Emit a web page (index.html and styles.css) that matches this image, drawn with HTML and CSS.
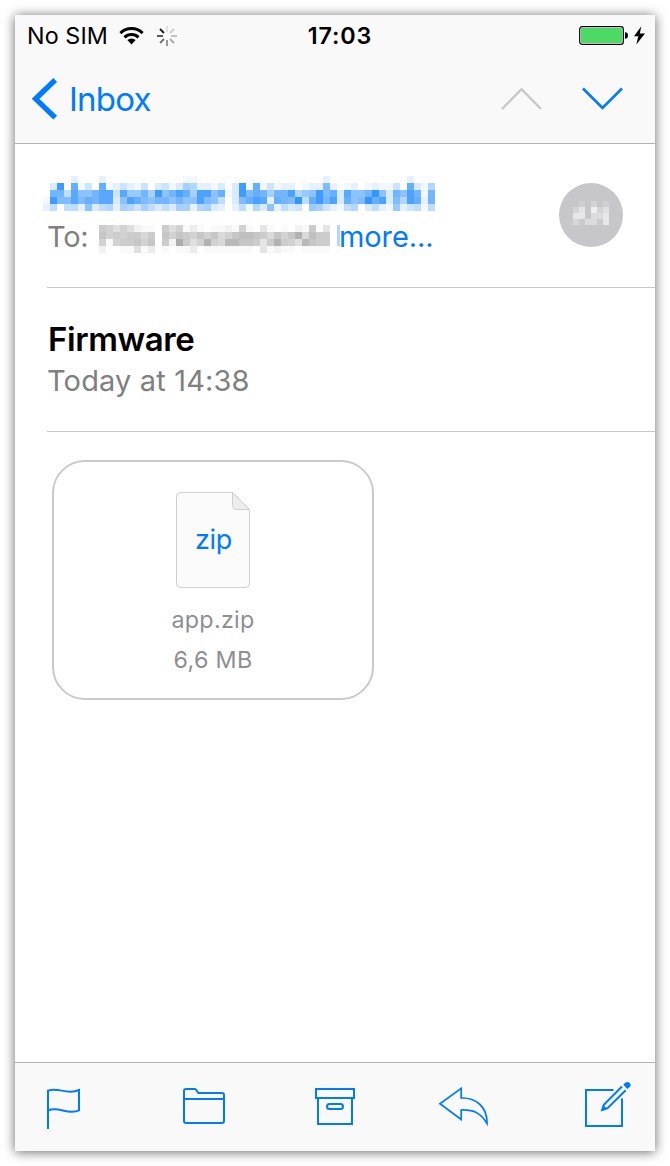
FILE: index.html
```html
<!DOCTYPE html>
<html lang="en">
<head>
<meta charset="utf-8">
<title>Firmware</title>
<link rel="stylesheet" href="styles.css">
</head>
<body>
<main class="phone">
  <header class="top">
    <div class="status">
      <div class="status-left">
        <span class="carrier">No SIM</span>
        <svg class="wifi" width="26" height="20" viewBox="0 0 26 20">
          <g fill="none" stroke="#000" stroke-width="3">
            <path d="M1.400 7.100A15.800 15.800 0 0 1 23.600 7.100"/>
            <path d="M5.500 11.400A10 10 0 0 1 19.500 11.400"/>
          </g>
          <path d="M8.300 14.100A6 6 0 0 1 16.700 14.100L12.500 18.400Z"/>
        </svg>
        <svg class="spinner" width="20" height="20" viewBox="-10 -10 20 20" stroke-width="1.8">
          <path stroke="#dedede" d="M0-4V-10"/>
          <path stroke="#cdcdcd" d="M3-3L7-7"/>
          <path stroke="#bbb" d="M4 0H10"/>
          <path stroke="#a5a5a5" d="M3 3L7 7"/>
          <path stroke="#8c8c8c" d="M0 4V10"/>
          <path stroke="#707070" d="M-3 3L-7 7"/>
          <path stroke="#484848" d="M-4 0H-10"/>
          <path stroke="#181818" d="M-3-3L-7-7"/>
        </svg>
      </div>
      <span class="clock">17:03</span>
      <div class="status-right">
        <svg width="67" height="20" viewBox="0 0 67 20">
          <rect x=".7" y=".7" width="43.600" height="17.600" rx="2.600" fill="#fff" stroke="#000" stroke-width="1.200"/>
          <rect x="2" y="2" width="41" height="15" rx="1.300" fill="#4cd964"/>
          <path d="M46 6.200C48.300 6.400 49 7.500 49 9.500S48.300 12.600 46 12.800Z"/>
          <path d="M62.300 .3L55 10.200H59.300L57.300 18.600L66 7.600H60.800Z"/>
        </svg>
      </div>
    </div>
    <nav class="nav">
      <a class="back">
        <svg width="26" height="42" viewBox="0 0 26 42" fill="none" stroke="#007aff" stroke-width="5.300"><path d="M23.200 2.000L3.600 20.800L23.200 39.700"/></svg>
        <span>Inbox</span>
      </a>
      <div class="arrows">
        <svg width="42" height="24" viewBox="0 0 42 24" fill="none" stroke="#c7c7c7" stroke-width="2.400"><path d="M1 22L20.500 2.200L40 22"/></svg>
        <svg width="42" height="24" viewBox="0 0 42 24" fill="none" stroke="#007aff" stroke-width="2.600"><path d="M1 1.500L20.500 21L40 1.500"/></svg>
      </div>
    </nav>
  </header>

  <section class="people">
    <svg class="mosaic-name" data-cell="7" data-ink="#007aff" data-scale="20" width="392" height="35" shape-rendering="crispEdges"></svg>
    <div class="recipient">
      <span class="to">To:</span>
      <svg class="mosaic-to" data-cell="7" data-ink="#000" data-scale="40" width="231" height="28" shape-rendering="crispEdges"></svg>
      <i class="sliver"></i>
      <a class="more">more...</a>
    </div>
    <div class="avatar">
      <svg class="mosaic-avatar" data-cell="6" data-ink="#fff" data-scale="14" width="42" height="24" shape-rendering="crispEdges"></svg>
    </div>
  </section>

  <section class="subject">
    <h1>Firmware</h1>
    <p>Today at 14:38</p>
  </section>

  <section class="content">
    <div class="attachment">
      <div class="file">
        <svg width="74" height="96" viewBox="0 0 74 96" stroke="#cfcfcf">
          <path fill="#fbfbfb" d="M4.500 .5H56.500L73.500 17.500V91.500A4 4 0 0 1 69.500 95.500H4.500A4 4 0 0 1 .5 91.500V4.500A4 4 0 0 1 4.500 .5Z"/>
          <path fill="#ededed" d="M56.500 .5V13.500A4 4 0 0 0 60.500 17.500H73.500Z"/>
        </svg>
        <span class="ext">zip</span>
      </div>
      <span class="filename">app.zip</span>
      <span class="size">6,6 MB</span>
    </div>
  </section>

  <footer class="toolbar">
    <svg class="flag" width="36" height="42" viewBox="0 0 36 42"><path d="M2 41V2.600C12-1.500 21 7.500 33 2V22.300C22 27.500 12 17.500 2 22.500"/></svg>
    <svg class="folder" width="44" height="38" viewBox="0 0 44 38"><path d="M2 33.500V4Q2 2 4 2H12.500Q14 2 14.700 3.500L16.300 6H40Q42 6 42 8V34Q42 36 40 36H4Q2 36 2 34ZM2 12H42"/></svg>
    <svg class="archive" width="40" height="38" viewBox="0 0 40 38"><path d="M1 2H39V11H1ZM3 11V37H37V11M14.500 17H25.500A2.500 2.500 0 0 1 25.500 22H14.500A2.500 2.500 0 0 1 14.500 17Z"/></svg>
    <svg class="reply" width="52" height="40" viewBox="0 0 52 40"><path stroke-width="1.700" d="M2 17.700L23.200 2.400V12C37 11.500 49.500 20 49 37.500C43 27 36 23.600 23.200 24V33.500Z"/></svg>
    <svg class="compose" width="48" height="48" viewBox="0 0 48 48"><path d="M30.500 10H3V46H39V18.500"/><path d="M39 6.500L20.800 24.700L19.500 29.800L24.600 28.200L42.700 10.200"/><path stroke="none" fill="#007aff" d="M17.500 31.500L20 25L24.500 29ZM40.300 4.700L42.500 2.600C45 .3 49.300 4 47 6.700L44.300 9Z"/></svg>
  </footer>
</main>
<script src="mosaic.js"></script>
</body>
</html>
```

FILE: mosaic.js
```js
// Each character is the opacity of one cell in base 36; a dot is an empty cell.
const rows = {
  'mosaic-name': [
    '....2...2...........11..................2...........2...',
    '.3f.c14.c124214.3413762213.3f1c14122.122a2.12.12114.c316',
    '.bb5d99bdd4d88b7f9bec7ee9c13facb7bbe689fac3d99bg93b9eb1b',
    '1faadacbdd39eca9bb9b99ea95.3aced2cbag5cfbe3c9agce3a6ec2b',
    '25.55293562764753537726732.2516392534.8742156.3521824515'
  ],
  'mosaic-to': [
    '87575211.857131.112171.41.1.218.4',
    '97878868.97987979679aa986979c6a88',
    '71788979.82d857c76bb99848c875b988',
    '2..11513.1.113.1111111.41211.1111'
  ],
  'mosaic-avatar': [
    '..2.3.2',
    '.37.a36',
    '.88.558',
    '1415518'
  ]
};

for (const [name, lines] of Object.entries(rows)) {
  const svg = document.querySelector('.' + name);
  const { cell, ink, scale } = svg.dataset;
  lines.forEach((line, y) => [...line].forEach((level, x) => {
    if (level === '.') return;
    const rect = document.createElementNS('http://www.w3.org/2000/svg', 'rect');
    rect.setAttribute('x', x * cell);
    rect.setAttribute('y', y * cell);
    rect.setAttribute('width', cell);
    rect.setAttribute('height', cell);
    rect.setAttribute('fill', ink);
    rect.setAttribute('fill-opacity', parseInt(level, 36) / scale);
    svg.append(rect);
  }));
}
```

FILE: styles.css
```css
* { box-sizing: border-box; }
body {
  margin: 0;
  padding: 15px;
  background: #fff;
  color: #000;
  font-family: Inter, "Liberation Sans", sans-serif;
}
svg { display: block; flex: none; }
.phone {
  width: 640px;
  height: 1136px;
  display: flex;
  flex-direction: column;
  background: #fff;
  box-shadow: 0 1px 11px rgba(0, 0, 0, .6);
}
.top {
  height: 129px;
  background: #f9f9f9;
  border-bottom: 1px solid #b2b2b2;
}
.status {
  height: 40px;
  display: grid;
  grid-template-columns: 1fr auto 1fr;
  align-items: center;
  padding: 1px 9px 0 12px;
  font-size: 23.3px;
  line-height: 40px;
}
.status-left { display: flex; align-items: center; }
.carrier { width: 92px; letter-spacing: .1px; white-space: nowrap; }
.spinner { margin-left: 12px; }
.clock { font-weight: 600; letter-spacing: .9px; margin-left: 7px; }
.status-right { display: flex; justify-content: flex-end; }
.nav {
  height: 88px;
  display: flex;
  justify-content: space-between;
  padding: 0 31px 0 17px;
}
.back {
  display: flex;
  align-items: center;
  gap: 11px;
  color: #007aff;
  font-size: 33px;
  letter-spacing: -.8px;
}
.arrows { display: flex; gap: 39px; padding-top: 32px; }
.people {
  height: 144px;
  margin-left: 32px;
  border-bottom: 1px solid #c8c8c8;
  display: grid;
  grid-template-columns: 1fr 96px;
  grid-template-rows: 35px 1fr;
  padding-top: 32px;
}
.mosaic-name { margin-left: -4px; }
.recipient {
  grid-row: 2;
  display: flex;
  align-items: flex-start;
  height: 44px;
  font-size: 29px;
  line-height: 52px;
  color: #808080;
}
.to { width: 52px; letter-spacing: -.3px; }
.mosaic-to { margin-top: 14px; }
.sliver { width: 3px; height: 21px; margin: 14px 0 0 7px; background: #b2d7ff; }
.more { color: #007aff; margin-left: -1px; letter-spacing: -.1px; }
.avatar {
  grid-column: 2;
  grid-row: 1 / 3;
  width: 64px;
  height: 64px;
  margin-top: 7px;
  border-radius: 50%;
  background: #c7c6cb;
  padding: 18px 0 0 8px;
}
.subject {
  height: 144px;
  margin-left: 32px;
  border-bottom: 1px solid #c8c8c8;
  padding: 30px 0 0;
}
.subject h1 { margin: 0 0 0 1px; font-size: 33px; line-height: 42px; font-weight: 600; letter-spacing: -.4px; }
.subject p { margin: 0; font-size: 29px; line-height: 42px; color: #808080; letter-spacing: .15px; }
.content { flex: 1; padding: 28px 37px; }
.attachment {
  width: 322px;
  height: 240px;
  border: 2px solid #cacaca;
  border-radius: 33px;
  padding-top: 30px;
  display: flex;
  flex-direction: column;
  align-items: center;
  color: #8e8e93;
  font-size: 23.3px;
  line-height: 40px;
  letter-spacing: .3px;
}
.file { display: grid; place-items: center; margin-bottom: 12px; }
.file > * { grid-area: 1 / 1; }
.ext { color: #007aff; font-size: 27px; line-height: 94px; letter-spacing: -.4px; padding-left: 1px; }
.toolbar {
  height: 89px;
  background: #f9f9f9;
  border-top: 1px solid #b2b2b2;
  display: grid;
  grid-template-columns: 136px 133px 123px 145px 48px;
  align-items: start;
  padding-left: 31px;
}
.toolbar svg { fill: none; stroke: #007aff; stroke-width: 2; }
.flag { margin-top: 25px; }
.folder, .archive { margin-top: 24px; }
.reply { margin-top: 23px; }
.compose { margin-top: 17px; }
```
